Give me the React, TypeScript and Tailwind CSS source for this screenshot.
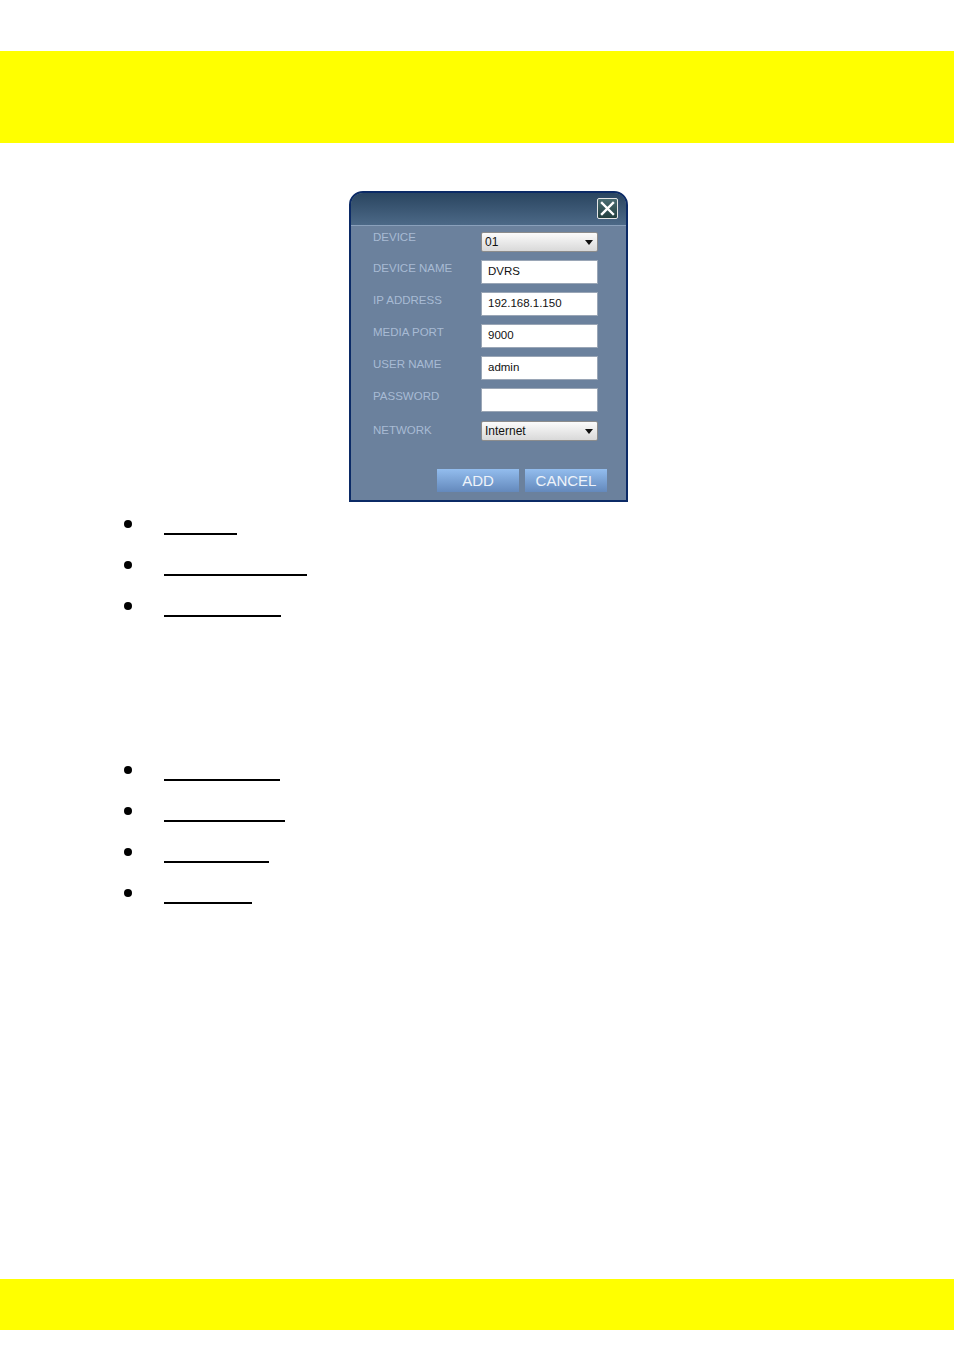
import React from "react";

type Field = {
  label: string;
  kind: "select" | "input";
  value: string;
  labelClass: string;
  fieldClass: string;
};

const fields: Field[] = [
  { label: "DEVICE", kind: "select", value: "01", labelClass: "mt-[2px]", fieldClass: "mt-[4px]" },
  { label: "DEVICE NAME", kind: "input", value: "DVRS", labelClass: "mt-[1px]", fieldClass: "" },
  { label: "IP ADDRESS", kind: "input", value: "192.168.1.150", labelClass: "mt-[1px]", fieldClass: "" },
  { label: "MEDIA PORT", kind: "input", value: "9000", labelClass: "mt-[1px]", fieldClass: "" },
  { label: "USER NAME", kind: "input", value: "admin", labelClass: "mt-[1px]", fieldClass: "" },
  { label: "PASSWORD", kind: "input", value: "", labelClass: "mt-[1px]", fieldClass: "" },
  { label: "NETWORK", kind: "select", value: "Internet", labelClass: "mt-[3px]", fieldClass: "mt-[1px]" },
];

const firstList = [73, 143, 117];
const secondList = [116, 121, 105, 88];

function Caret() {
  return (
    <svg width="8" height="5" viewBox="0 0 8 5" className="shrink-0">
      <path d="M0 0 H8 L4 5 Z" fill="#111" />
    </svg>
  );
}

function DialogField({ f }: { f: Field }) {
  if (f.kind === "select") {
    return (
      <div
        className={`${f.fieldClass} w-[117px] h-[20px] flex items-center justify-between pl-[3px] pr-[4px] border border-[#8c8c8c] rounded-[2px] bg-gradient-to-b from-[#fbfbfb] to-[#d9d9d9] text-[12px] text-[#111]`}
      >
        <span className="leading-none">{f.value}</span>
        <Caret />
      </div>
    );
  }
  return (
    <div
      className={`${f.fieldClass} w-[117px] h-[24px] flex items-center px-[6px] bg-white border border-[#9aa6b6] text-[11.5px] text-[#111]`}
    >
      {f.value}
    </div>
  );
}

function BulletList({ widths }: { widths: number[] }) {
  return (
    <ul className="flex flex-col">
      {widths.map((w, i) => (
        <li key={i} className="h-[41px] flex items-start">
          <span className="ml-[124px] mt-[10px] w-[8px] h-[8px] rounded-full bg-black" />
          <span className="ml-[32px] mt-[23px] h-[2px] bg-black" style={{ width: w }} />
        </li>
      ))}
    </ul>
  );
}

export default function App() {
  return (
    <div className="w-[954px] min-h-[1354px] bg-white flex flex-col" style={{ fontFamily: '"Liberation Sans", Arial, sans-serif' }}>
      <div className="h-[51px]" />
      <div className="h-[92px] bg-[#ffff00]" />
      <div className="h-[48px]" />

      <div className="ml-[349px] w-[279px] h-[311px] border-2 border-[#0b2a66] rounded-t-[14px] bg-[#6b819d] flex flex-col overflow-hidden">
        <div className="h-[33px] shrink-0 flex items-start justify-end pr-[8px] pt-[5px] bg-gradient-to-b from-[#2a4560] to-[#4c6987] border-b border-[#8aa0bb]">
          <div className="w-[21px] h-[21px] border border-[#e6e6e6] rounded-[2px] bg-gradient-to-b from-[#4a6c72] to-[#23403f] flex items-center justify-center">
            <svg width="15" height="15" viewBox="0 0 15 15">
              <path d="M2 2 L13 13 M13 2 L2 13" stroke="#ffffff" strokeWidth="2.4" strokeLinecap="square" />
            </svg>
          </div>
        </div>

        <div className="flex flex-col pl-[22px] pt-[2px]">
          {fields.map((f) => (
            <div key={f.label} className="h-[32px] flex items-start">
              <span className={`${f.labelClass} w-[108px] text-[11.5px] leading-[14px] text-[#a8bbd4]`}>{f.label}</span>
              <DialogField f={f} />
            </div>
          ))}
        </div>

        <div className="flex gap-[6px] pl-[86px] mt-[17px]">
          <button className="w-[82px] h-[23px] bg-gradient-to-b from-[#93bdee] to-[#6489bc] text-[15px] text-[#eef3fa] leading-none">
            ADD
          </button>
          <button className="w-[82px] h-[23px] bg-gradient-to-b from-[#93bdee] to-[#6489bc] text-[15px] text-[#eef3fa] leading-none">
            CANCEL
          </button>
        </div>
      </div>

      <div className="h-[8px]" />
      <BulletList widths={firstList} />
      <div className="h-[123px]" />
      <BulletList widths={secondList} />

      <div className="h-[359px]" />
      <div className="h-[51px] bg-[#ffff00]" />
      <div className="h-[24px]" />
    </div>
  );
}
